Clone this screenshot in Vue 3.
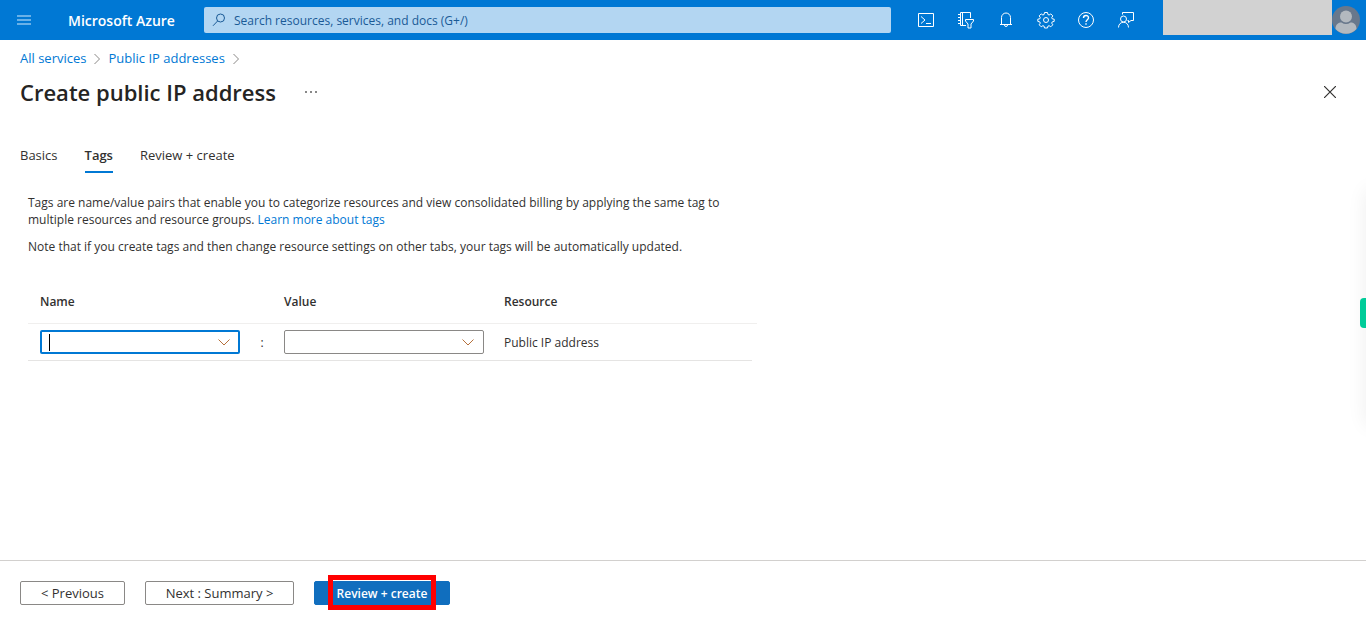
<script setup>
import { ref } from 'vue'

const search = ref('')
const tagName = ref('')
const tagValue = ref('')
const tabs = [
  { label: 'Basics', active: false },
  { label: 'Tags', active: true },
  { label: 'Review + create', active: false },
]
</script>

<template>
  <div class="portal">
    <header class="topbar">
      <button class="menu" aria-label="Show portal menu">
        <svg width="14" height="10" viewBox="0 0 14 10">
          <path d="M0 1h14M0 5h14M0 9h14" stroke="#8cc3ee" stroke-width="1.400" />
        </svg>
      </button>
      <a class="brand" href="#">Microsoft Azure</a>
      <label class="search">
        <svg width="14" height="14" viewBox="0 0 14 14" fill="none" stroke="#1a5a96">
          <circle cx="8.5" cy="5" r="4" />
          <path d="M5.6 8 1 12.8" />
        </svg>
        <input v-model="search" type="text" placeholder="Search resources, services, and docs (G+/)" aria-label="Search" />
      </label>
      <nav class="tools" aria-label="Portal tools">
        <button aria-label="Cloud Shell">
          <svg width="18" height="18" viewBox="0 0 18 18">
            <path d="M1.500 2.500h15v13h-15zM4 5.500l4 3.500-4 3.500M9 12.500h5" />
          </svg>
        </button>
        <button aria-label="Directories and subscriptions">
          <svg width="18" height="18" viewBox="0 0 18 18">
            <path d="M9 14.500H3.500v-13h10V7M5.500 1.500v13M1 3.500h2.500M1 6.500h2.500M1 9.500h2.500M1 12.500h2.500" />
            <path d="M8.500 8.500h8v1.500l-2.500 3v4h-3v-4l-2.500-3z" />
          </svg>
        </button>
        <button aria-label="Notifications">
          <svg width="18" height="18" viewBox="0 0 18 18">
            <path d="M4.500 13V6.500a4.500 4.500 0 0 1 9 0V13M3 13.500h12M7.500 14a1.500 1.500 0 0 0 3 0" />
          </svg>
        </button>
        <button aria-label="Settings">
          <svg width="18" height="18" viewBox="0 0 18 18">
            <path stroke-linejoin="round" d="M7.500 1.500h3l.4 2 1.200.5 1.700-1.100 2 2-1.100 1.800.5 1.100 2 .4v2.200l-2 .5-.5 1.200 1.100 1.700-2 2-1.700-1.100-1.200.5-.4 1.800h-3l-.4-1.800-1.200-.5-1.700 1.100-2-2 1.100-1.700-.5-1.200-2-.5V8.200l2-.4.5-1.100-1.100-1.800 2-2L5.900 4l1.200-.5z" />
            <circle cx="9" cy="9" r="2.500" />
          </svg>
        </button>
        <button aria-label="Help">
          <svg width="18" height="18" viewBox="0 0 18 18">
            <circle cx="9" cy="9" r="7.500" />
            <path stroke-width="1.400" d="M6.500 7c0-3.400 5-3.200 5-.3 0 2-2.500 2-2.500 4.300M9 12.200v1.600" />
          </svg>
        </button>
        <button aria-label="Feedback">
          <svg width="18" height="18" viewBox="0 0 18 18">
            <circle cx="6.500" cy="8" r="3" />
            <path d="M1.500 16.500c0-7 10-7 10 0M5.500 3.500v-2h11v8h-2.500l-2.500 2v-2h-1" />
          </svg>
        </button>
      </nav>
      <div class="account"></div>
      <button class="avatar" aria-label="Account">
        <svg width="28" height="28" viewBox="0 0 28 28">
          <circle cx="14" cy="14" r="14" fill="#68788c" />
          <circle cx="14" cy="10.500" r="6" fill="#b3b9bf" />
          <path d="M3.500 23c0-5 3-6.500 6-6.500 3 2 6 2 9 0 3 0 6 1.500 6 6.500a14 14 0 0 1-21 0z" fill="#b3b9bf" />
        </svg>
      </button>
    </header>

    <nav class="crumbs" aria-label="Breadcrumb">
      <a href="#">All services</a>
      <svg width="6" height="12" viewBox="0 0 6 12"><path d="M.5 1 5.500 6 .5 11" /></svg>
      <a href="#">Public IP addresses</a>
      <svg width="6" height="12" viewBox="0 0 6 12"><path d="M.5 1 5.500 6 .5 11" /></svg>
    </nav>

    <div class="heading">
      <h1>Create public IP address</h1>
      <button class="more" aria-label="More actions">
        <svg width="12" height="2" viewBox="0 0 12 2"><path d="M0 0h2v2H0zM5 0h2v2H5zM10 0h2v2h-2z" fill="#888" /></svg>
      </button>
      <button class="close" aria-label="Close">
        <svg width="12" height="12" viewBox="0 0 12 12"><path d="M0 0l12 12M12 0 0 12" stroke="#323130" stroke-width="1.200" /></svg>
      </button>
    </div>

    <nav class="tabs" aria-label="Steps">
      <button v-for="tab in tabs" :key="tab.label" :class="{ active: tab.active }">{{ tab.label }}</button>
    </nav>

    <main>
      <p>
        Tags are name/value pairs that enable you to categorize resources and view consolidated billing by applying the same tag to<br />
        multiple resources and resource groups. <a href="#">Learn more about tags</a>
      </p>
      <p>Note that if you create tags and then change resource settings on other tabs, your tags will be automatically updated.</p>

      <table>
        <thead>
          <tr>
            <th id="col-name" class="field" scope="col">Name</th>
            <td class="gap"></td>
            <th id="col-value" class="field" scope="col">Value</th>
            <th class="resource" scope="col">Resource</th>
          </tr>
        </thead>
        <tbody>
          <tr>
            <td class="field">
              <div class="combo focused">
                <input v-model="tagName" type="text" role="combobox" aria-expanded="false" aria-labelledby="col-name" />
                <span class="caret"></span>
                <button aria-label="Show names">
                  <svg width="12" height="7" viewBox="0 0 12 7"><path d="M.5.5 6 6 11.500.5" /></svg>
                </button>
              </div>
            </td>
            <td class="gap">:</td>
            <td class="field">
              <div class="combo">
                <input v-model="tagValue" type="text" role="combobox" aria-expanded="false" aria-labelledby="col-value" />
                <button aria-label="Show values">
                  <svg width="12" height="7" viewBox="0 0 12 7"><path d="M.5.5 6 6 11.500.5" /></svg>
                </button>
              </div>
            </td>
            <td class="resource">Public IP address</td>
          </tr>
        </tbody>
      </table>
    </main>

    <footer>
      <button class="previous">&lt; Previous</button>
      <button class="next">Next : Summary &gt;</button>
      <button class="primary">Review + create<span class="marker"></span></button>
    </footer>

    <div class="side-shadow"></div>
    <button class="side-tab" aria-label="Open side panel"></button>
  </div>
</template>

<style>
body {
  margin: 0;
  background: #fff;
}
</style>

<style scoped>
.portal {
  position: relative;
  display: flex;
  flex-direction: column;
  min-height: 100vh;
  overflow: hidden;
  color: #323130;
  font: 13px/17px "Segoe UI", "Open Sans", "Noto Sans", sans-serif;
}
*,
*::before,
*::after {
  box-sizing: border-box;
}
button,
input {
  margin: 0;
  padding: 0;
  border: 0;
  outline: 0;
  background: none;
  color: inherit;
  font: inherit;
}
button {
  cursor: pointer;
}
svg {
  display: block;
  flex: none;
}
a {
  color: #0078d4;
  text-decoration: none;
}
.topbar {
  display: flex;
  align-items: center;
  height: 40px;
  background: #0078d4;
}
.menu {
  display: flex;
  align-items: center;
  justify-content: center;
  width: 48px;
  height: 40px;
}
.brand {
  width: 136px;
  margin: 0 0 0 20px;
  color: #fff;
  font-size: 14px;
  font-weight: 600;
  white-space: nowrap;
}
.search {
  display: flex;
  flex: 1;
  align-items: center;
  gap: 8px;
  height: 26px;
  padding: 0 8px;
  border-radius: 2px;
  background: #b3d6f2;
  color: #1a5a96;
  font-size: 12px;
}
.search input {
  flex: 1;
  min-width: 0;
}
.search input::placeholder {
  color: #1a5a96;
  opacity: 1;
}
.tools {
  display: flex;
  margin: 0 17px 0 15px;
}
.tools button {
  display: flex;
  align-items: center;
  justify-content: center;
  width: 40px;
  height: 40px;
}
.tools svg {
  fill: none;
  stroke: #fff;
}
.account {
  align-self: flex-start;
  width: 169px;
  height: 35px;
  background: #d2d2d2;
}
.avatar {
  margin-right: 6px;
}
.crumbs {
  display: flex;
  align-items: center;
  gap: 8px;
  padding: 10px 20px 0;
}
.crumbs svg {
  fill: none;
  stroke: #8a8886;
}
.heading {
  display: flex;
  align-items: center;
  padding: 10px 30px 0 20px;
}
h1 {
  margin: 0;
  color: #252423;
  font-size: 22px;
  font-weight: 600;
  line-height: 30px;
}
.more {
  margin-left: 29px;
}
.close {
  margin-left: auto;
}
.tabs {
  display: flex;
  gap: 27px;
  padding: 36px 20px 0;
}
.tabs button {
  height: 30px;
  padding-bottom: 4px;
  border-bottom: 2px solid transparent;
}
.tabs .active {
  border-color: #0078d4;
  font-weight: 600;
}
main {
  flex: 1;
  padding: 21px 28px;
  font-size: 12px;
}
p {
  margin: 0 0 10px;
  white-space: nowrap;
}
table {
  width: 729px;
  margin-top: 24px;
  border-collapse: collapse;
  table-layout: fixed;
}
th,
td {
  padding: 0;
  font-weight: 400;
  text-align: left;
}
th {
  font-weight: 600;
}
thead tr {
  height: 45px;
  background: linear-gradient(#f0efee, #f0efee) left bottom / 100% 1px no-repeat;
}
tbody tr {
  height: 37px;
  background: linear-gradient(#e5e4e3, #e5e4e3) left bottom / calc(100% - 5px) 1px no-repeat;
}
tbody td {
  padding-bottom: 1px;
}
.field {
  width: 212px;
  padding-left: 12px;
}
.gap {
  width: 32px;
  padding-left: 12px;
  text-align: center;
}
.resource {
  padding-left: 20px;
}
.combo {
  position: relative;
  display: flex;
  align-items: center;
  width: 200px;
  height: 24px;
  border: 1px solid #8a8886;
  border-radius: 2px;
}
.combo.focused {
  border: 2px solid #0078d4;
}
.combo input {
  flex: 1;
  min-width: 0;
  padding-left: 8px;
}
.combo svg {
  margin: 0 9px;
  fill: none;
  stroke: #b5703c;
}
.combo.focused svg {
  margin: 0 8px;
}
.caret {
  position: absolute;
  top: 2px;
  left: 7px;
  width: 1px;
  height: 17px;
  background: #000;
}
footer {
  display: flex;
  gap: 20px;
  padding: 20px 20px;
  border-top: 1px solid #d2d0ce;
}
footer button {
  height: 24px;
  border: 1px solid #8a8886;
  border-radius: 2px;
}
.previous {
  width: 105px;
}
.next {
  width: 149px;
}
footer .primary {
  position: relative;
  width: 136px;
  border-color: #106ebe;
  background: #106ebe;
  color: #fff;
  font-size: 12px;
  font-weight: 600;
}
.marker {
  position: absolute;
  inset: -7px 13px -6px;
  border: 5px solid #f00;
}
.side-shadow {
  position: absolute;
  top: 190px;
  right: -20px;
  width: 20px;
  height: 235px;
  box-shadow: 0 0 20px rgba(0, 0, 0, 0.07);
}
.side-tab {
  position: absolute;
  top: 298px;
  right: 0;
  width: 6px;
  height: 30px;
  border-radius: 4px 0 0 4px;
  background: #00cc99;
}
</style>
